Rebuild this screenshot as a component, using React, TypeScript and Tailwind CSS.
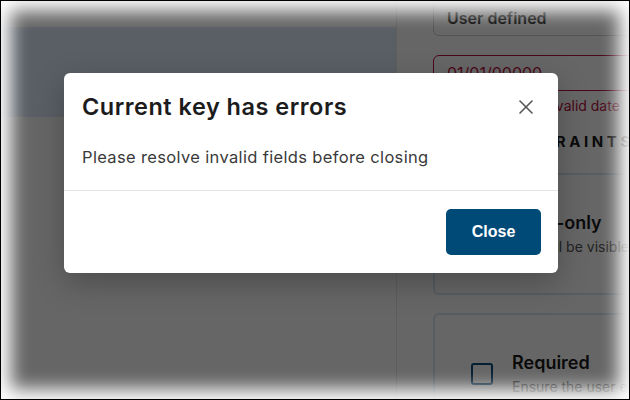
import { X } from 'lucide-react';

function SettingCard({ title, hint, checked }: { title: string; hint: string; checked?: boolean }) {
  return (
    <div className="w-[260px] shrink-0 rounded-md border-2 border-[#d9e6f3] bg-white px-9 py-[36px]">
      <div className="flex items-center gap-[19px]">
        <div
          className={
            'h-[22px] w-[22px] shrink-0 rounded-[3px] border-2 border-[#0b4f7a] ' +
            (checked ? 'bg-[#0b4f7a]' : 'bg-white')
          }
        />
        <div className="min-w-0">
          <div className="whitespace-nowrap text-[18px] font-semibold leading-6 text-[#1b1b1b]">{title}</div>
          <div className="mt-[2px] whitespace-nowrap text-[14px] leading-5 text-[#555]">{hint}</div>
        </div>
      </div>
    </div>
  );
}

export default function App() {
  return (
    <div className="relative h-[400px] w-[630px] overflow-hidden border border-black bg-white font-['Inter',sans-serif]">
      {/* page behind the dialog */}
      <div className="flex h-full">
        <div className="flex w-[396px] shrink-0 flex-col border-r border-[#e8e8e8]">
          <div className="h-[26px] bg-white" />
          <div className="h-[90px] bg-[#e1edfd]" />
          <div className="flex-1 bg-white" />
        </div>

        <div className="flex flex-1 flex-col overflow-hidden pl-9">
          <div className="-mt-px flex h-[36px] w-[260px] shrink-0 items-center rounded-md border border-[#cfcfcf] px-[13px] text-[16px] font-semibold text-[#1b1b1b]">
            User defined
          </div>
          <div className="mt-[19px] flex h-[36px] w-[260px] shrink-0 items-center rounded-md border border-[#b8133d] px-[13px] text-[16px] text-[#b8133d]">
            01/01/00000
          </div>
          <div className="mt-[5px] whitespace-nowrap pl-[111px] text-[14px] leading-5 text-[#b8133d]">Invalid date</div>
          <div className="mt-[16px] whitespace-nowrap pl-[2px] text-[15px] font-bold leading-5 tracking-[0.24em] text-[#1b1b1b]">
            KEY CONSTRAINTS
          </div>
          <div className="mt-[21px] flex flex-col gap-[18px]">
            <SettingCard title="Read-only" hint="Key will be visible to users" />
            <SettingCard title="Required" hint="Ensure the user enters a value" />
          </div>
        </div>
      </div>

      {/* backdrop */}
      <div className="absolute inset-0 bg-black/60" />

      {/* dialog */}
      <div className="absolute left-[63px] top-[72px] w-[494px] rounded-md bg-white shadow-[0_10px_30px_rgba(0,0,0,0.25)]">
        <div className="flex items-center justify-between pl-[18px] pr-[20px] pt-[18px]">
          <h2 className="text-[23.5px] font-semibold leading-8 tracking-[0.5px] text-[#1c1c1c]">Current key has errors</h2>
          <X size={24} strokeWidth={1.6} className="text-[#555]" />
        </div>
        <p className="px-[18px] pb-[21px] pt-[22px] text-[16.5px] leading-6 tracking-[0.35px] text-[#3a3a3a]">
          Please resolve invalid fields before closing
        </p>
        <div className="flex justify-end border-t border-[#e4e4e7] px-[17px] pb-[18px] pt-[18px]">
          <button className="h-[46px] w-[95px] rounded-[5px] bg-[#004a77] font-['Liberation_Sans',Arial,sans-serif] text-[16px] font-bold text-white">
            Close
          </button>
        </div>
      </div>

      {/* soft screenshot edge */}
      <div className="pointer-events-none absolute inset-0 shadow-[inset_0_0_18px_10px_#fff]" />
    </div>
  );
}
